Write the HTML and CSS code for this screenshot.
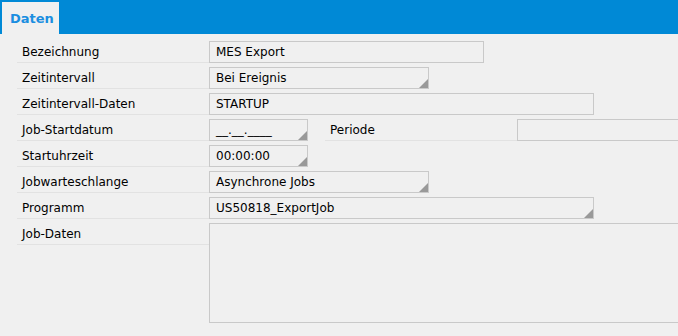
FILE: index.html
```html
<!DOCTYPE html>
<html>
<head>
<meta charset="utf-8">
<link rel="stylesheet" href="styles.css">
</head>
<body>
<div class="tabbar">
  <div class="tab">Daten</div>
</div>
<div class="form">
  <div class="row">
    <div class="label">Bezeichnung</div>
    <div class="field w275">MES Export</div>
  </div>
  <div class="row">
    <div class="label">Zeitintervall</div>
    <div class="field w220 combo">Bei Ereignis</div>
  </div>
  <div class="row">
    <div class="label">Zeitintervall-Daten</div>
    <div class="field w385">STARTUP</div>
  </div>
  <div class="row">
    <div class="label">Job-Startdatum</div>
    <div class="field w99 combo">__.__.____</div>
    <div class="label sub">Periode</div>
    <div class="field grow open"></div>
  </div>
  <div class="row">
    <div class="label">Startuhrzeit</div>
    <div class="field w99 combo">00:00:00</div>
  </div>
  <div class="row">
    <div class="label">Jobwarteschlange</div>
    <div class="field w220 combo">Asynchrone Jobs</div>
  </div>
  <div class="row">
    <div class="label">Programm</div>
    <div class="field w385 combo">US50818_ExportJob</div>
  </div>
  <div class="row">
    <div class="label">Job-Daten</div>
    <div class="field grow open area"></div>
  </div>
</div>
</body>
</html>
```
FILE: styles.css
```css
html, body {
  margin: 0;
  padding: 0;
  background: #f0f0f0;
  font-family: "DejaVu Sans", Verdana, sans-serif;
  font-size: 12px;
  color: #000;
  overflow: hidden;
}
.tabbar {
  height: 34px;
  background: #0089d6;
  display: flex;
  align-items: flex-end;
  padding-left: 2px;
  box-sizing: border-box;
}
.tab {
  width: 57px;
  height: 32px;
  background: #f0f0f0;
  color: #1b8ee0;
  font-weight: bold;
  font-size: 13px;
  box-sizing: border-box;
  padding-left: 8px;
  line-height: 33px;
}
.form {
  padding: 7px 0 0 17px;
  display: flex;
  flex-direction: column;
  gap: 4px;
}
.row {
  display: flex;
  align-items: flex-start;
  height: 22px;
}
.row:last-child {
  height: 100px;
}
.label {
  width: 192px;
  height: 22px;
  box-sizing: border-box;
  padding-left: 5px;
  line-height: 23px;
  border-bottom: 1px solid #e2e2e2;
  flex: none;
}
.label.sub {
  width: 192px;
  margin-left: 17px;
  padding-left: 5px;
}
.field {
  height: 22px;
  box-sizing: border-box;
  border: 1px solid #c9c9c9;
  padding-left: 6px;
  line-height: 21px;
  position: relative;
  flex: none;
  white-space: nowrap;
}
.w275 { width: 275px; }
.w220 { width: 220px; }
.w385 { width: 385px; }
.w99 { width: 99px; }
.grow { flex: 1; }
.open { border-right: none; }
.area { height: 100px; }
.combo::after {
  content: "";
  position: absolute;
  right: 0;
  bottom: 0;
  width: 9px;
  height: 9px;
  background: #999;
  clip-path: polygon(100% 0, 100% 100%, 0 100%);
}
```
